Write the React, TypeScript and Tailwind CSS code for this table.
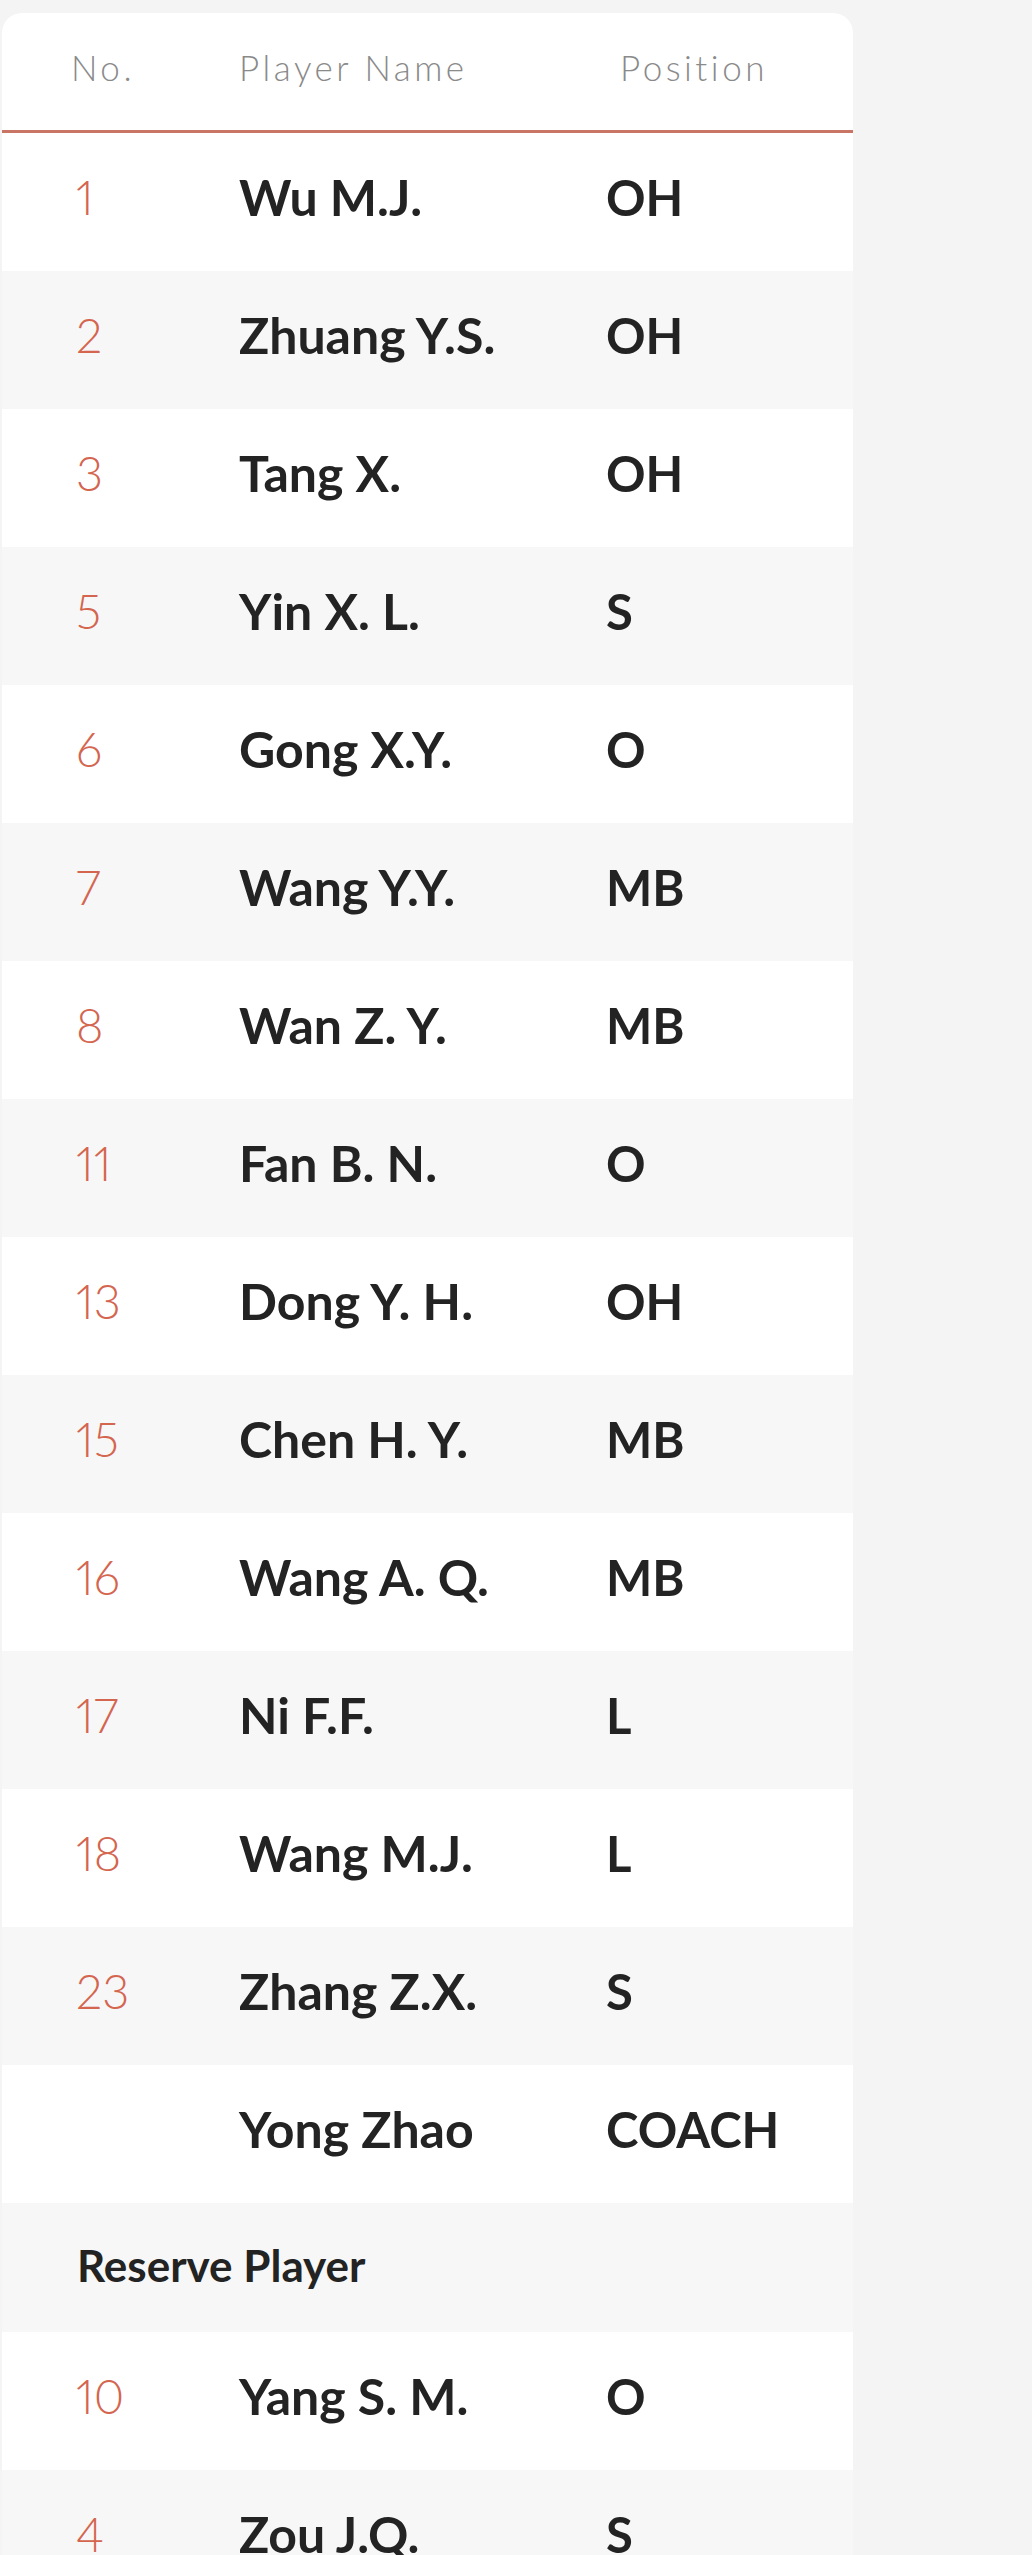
const players = [
  { no: '1', name: 'Wu M.J.', pos: 'OH' },
  { no: '2', name: 'Zhuang Y.S.', pos: 'OH' },
  { no: '3', name: 'Tang X.', pos: 'OH' },
  { no: '5', name: 'Yin X. L.', pos: 'S' },
  { no: '6', name: 'Gong X.Y.', pos: 'O' },
  { no: '7', name: 'Wang Y.Y.', pos: 'MB' },
  { no: '8', name: 'Wan Z. Y.', pos: 'MB' },
  { no: '11', name: 'Fan B. N.', pos: 'O' },
  { no: '13', name: 'Dong Y. H.', pos: 'OH' },
  { no: '15', name: 'Chen H. Y.', pos: 'MB' },
  { no: '16', name: 'Wang A. Q.', pos: 'MB' },
  { no: '17', name: 'Ni F.F.', pos: 'L' },
  { no: '18', name: 'Wang M.J.', pos: 'L' },
  { no: '23', name: 'Zhang Z.X.', pos: 'S' },
  { no: '', name: 'Yong Zhao', pos: 'COACH' },
];

const reserves = [
  { no: '10', name: 'Yang S. M.', pos: 'O' },
  { no: '4', name: 'Zou J.Q.', pos: 'S' },
];

type Player = { no: string; name: string; pos: string };

const Row = ({ player, striped }: { player: Player; striped: boolean }) => (
  <div className={`flex items-center h-[138px] ${striped ? 'bg-[#f7f7f7]' : 'bg-white'}`}>
    <div className="w-[237px] pl-[74px] pb-[10px] text-[47px] leading-none font-light proportional-nums text-[#d4654f]">
      {player.no}
    </div>
    <div className="w-[367px] pb-[10px] text-[50px] leading-none font-bold text-[#232323]">
      {player.name}
    </div>
    <div className="pb-[10px] text-[49px] leading-none font-bold text-[#232323]">{player.pos}</div>
  </div>
);

const App = () => {
  return (
    <div className="min-h-[2555px] bg-[#f4f4f5] pt-[13px] font-['Lato','Liberation_Sans',sans-serif]">
      <div className="ml-[2px] w-[851px] bg-white rounded-t-[20px] overflow-hidden">
        <div className="flex items-center h-[120px] border-b-[3px] border-[#c87566] pb-[8px]">
          <div className="w-[237px] pl-[69px] text-[35px] font-light tracking-widest text-[#8a8a8a]">No.</div>
          <div className="w-[381px] text-[35px] font-light tracking-widest text-[#8a8a8a]">Player Name</div>
          <div className="text-[35px] font-light tracking-widest text-[#8a8a8a]">Position</div>
        </div>

        {players.map((p, i) => (
          <Row key={p.name} player={p} striped={i % 2 === 1} />
        ))}

        <div className="flex items-center h-[129px] bg-[#f7f7f7] pl-[75px] pb-[6px]">
          <span className="text-[44px] leading-none font-bold text-[#232323]">Reserve Player</span>
        </div>

        {reserves.map((p, i) => (
          <Row key={p.name} player={p} striped={i % 2 === 1} />
        ))}
      </div>
    </div>
  );
};

export default App;
